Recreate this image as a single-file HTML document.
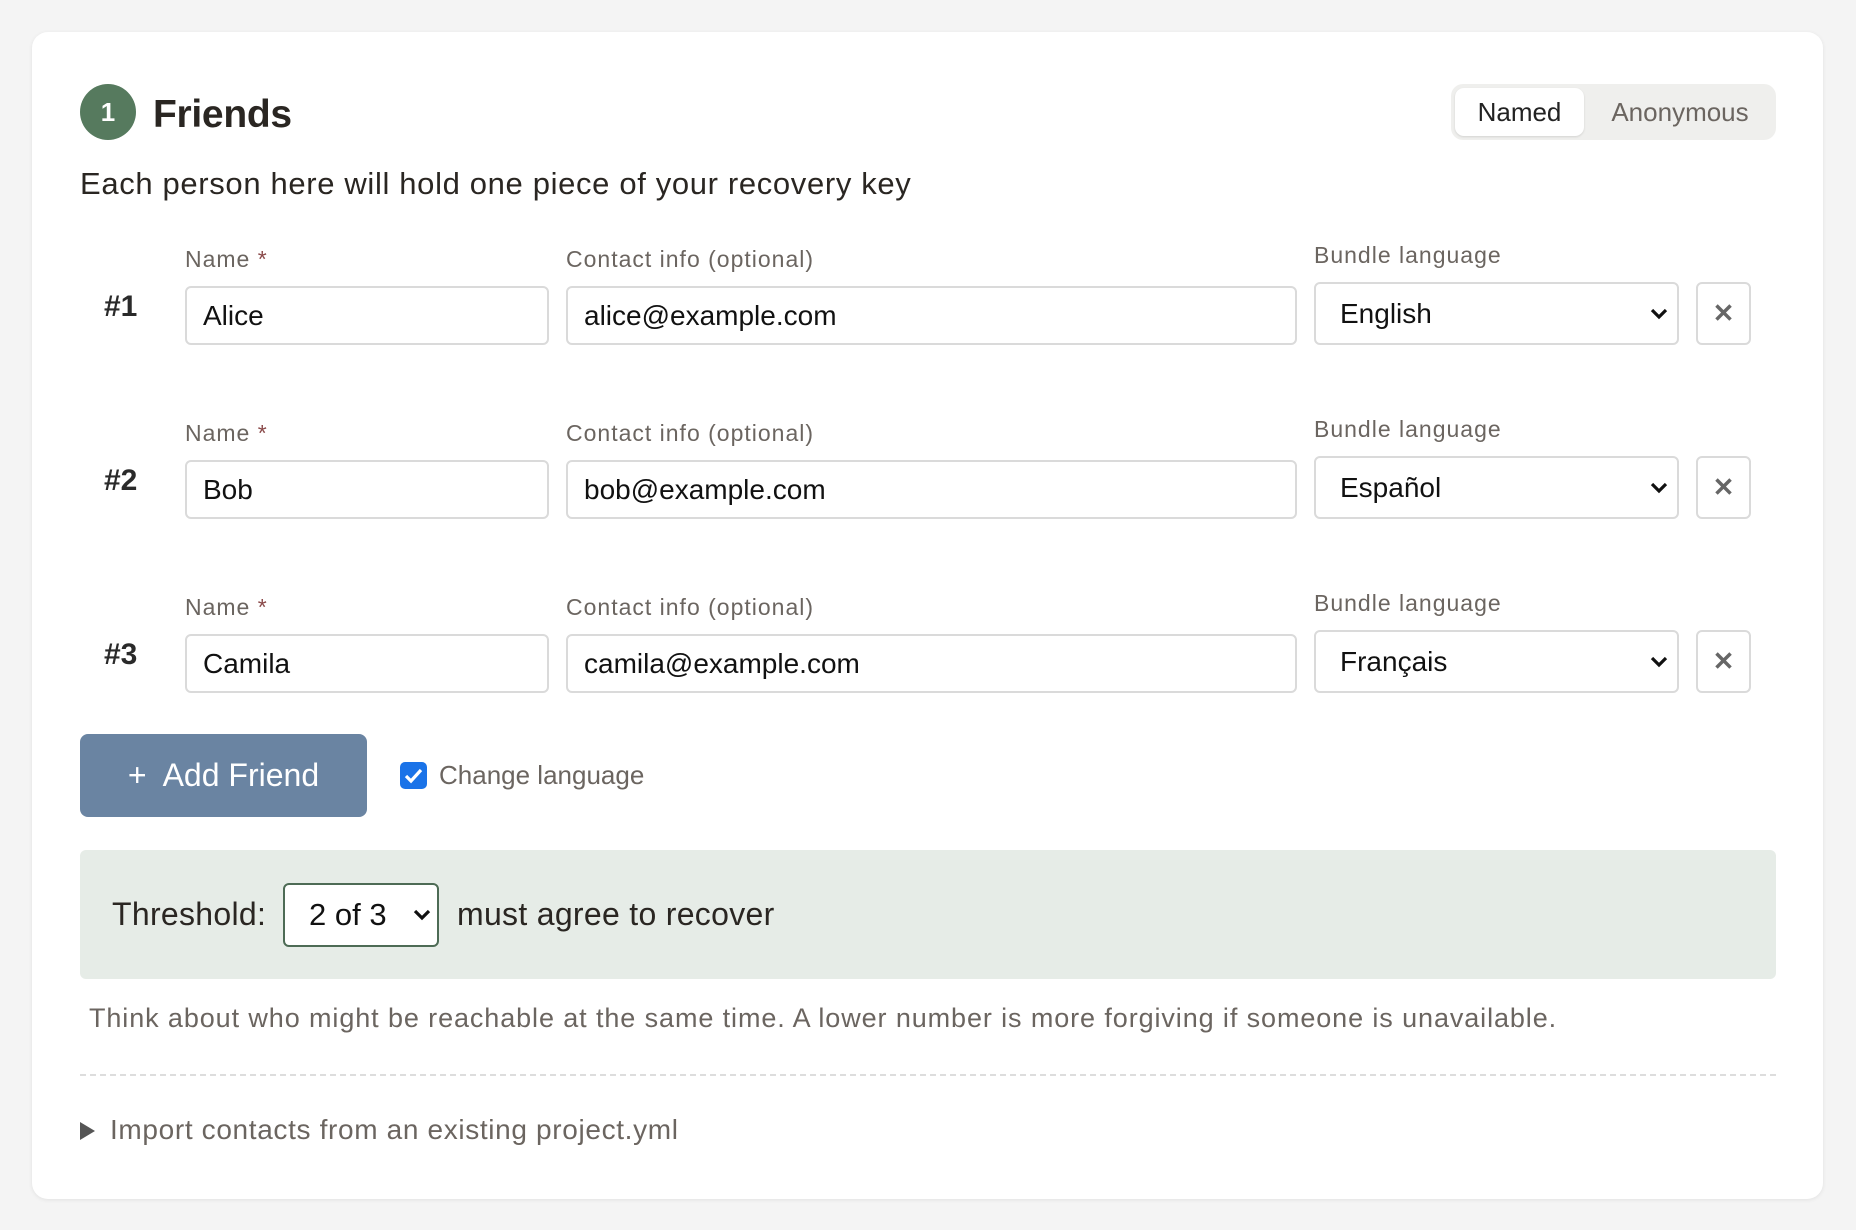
<!DOCTYPE html><html><head><meta charset="utf-8"><style>
body{margin:0;width:1856px;height:1230px;background:#f4f4f4;font-family:"Liberation Sans",sans-serif;position:relative;overflow:hidden}
.a{position:absolute}
.card{left:32px;top:32px;width:1791px;height:1167px;background:#fff;border-radius:16px;box-shadow:0 1px 4px rgba(0,0,0,.08)}
.inp{position:absolute;box-sizing:border-box;border:2px solid #dadada;border-radius:6px;background:#fff;font-size:28px;color:#111;padding-left:16px;display:flex;align-items:center}
.lbl{position:absolute;font-size:23px;color:#6b6560;letter-spacing:1px}
.num{position:absolute;font-size:30px;font-weight:bold;color:#2a2a2a}
.chev{position:absolute;right:8px;top:50%;margin-top:-7px}
</style></head><body>
<div class="a card"></div>
<div class="a" style="left:80px;top:84px;width:56px;height:56px;border-radius:50%;background:#567a5e;color:#fff;font-size:26px;font-weight:bold;display:flex;align-items:center;justify-content:center">1</div>
<div class="a" style="left:153px;top:93px;font-size:39px;font-weight:bold;color:#2a2622;letter-spacing:-0.3px">Friends</div>
<div class="a" style="left:1451px;top:84px;width:325px;height:56px;background:#efefed;border-radius:12px"></div>
<div class="a" style="left:1455px;top:88px;width:129px;height:48px;background:#fff;border-radius:9px;box-shadow:0 1px 2px rgba(0,0,0,.12);font-size:26px;color:#222;display:flex;align-items:center;justify-content:center">Named</div>
<div class="a" style="left:1584px;top:88px;width:192px;height:48px;font-size:26px;color:#6b6560;display:flex;align-items:center;justify-content:center">Anonymous</div>
<div class="a" style="left:80px;top:166px;font-size:31px;color:#2a2622;letter-spacing:0.65px">Each person here will hold one piece of your recovery key</div>

<div class="num" style="left:104px;top:290px">#1</div>
<div class="lbl" style="left:185px;top:246px">Name <span style="color:#8a4a4a">*</span></div>
<div class="lbl" style="left:566px;top:246px">Contact info (optional)</div>
<div class="lbl" style="left:1314px;top:242px">Bundle language</div>
<div class="inp" style="left:185px;top:286px;width:364px;height:59px">Alice</div>
<div class="inp" style="left:566px;top:286px;width:731px;height:59px">alice@example.com</div>
<div class="inp" style="left:1314px;top:282px;width:365px;height:63px;padding-left:24px">English<svg class="chev" width="20" height="14" viewBox="0 0 20 14"><path d="M3 3l7 7 7-7" stroke="#111" stroke-width="3.2" fill="none"/></svg></div>
<div class="inp" style="left:1696px;top:282px;width:55px;height:63px;padding:0;justify-content:center;color:#666;font-size:26px;font-weight:bold">✕</div>

<div class="num" style="left:104px;top:464px">#2</div>
<div class="lbl" style="left:185px;top:420px">Name <span style="color:#8a4a4a">*</span></div>
<div class="lbl" style="left:566px;top:420px">Contact info (optional)</div>
<div class="lbl" style="left:1314px;top:416px">Bundle language</div>
<div class="inp" style="left:185px;top:460px;width:364px;height:59px">Bob</div>
<div class="inp" style="left:566px;top:460px;width:731px;height:59px">bob@example.com</div>
<div class="inp" style="left:1314px;top:456px;width:365px;height:63px;padding-left:24px">Español<svg class="chev" width="20" height="14" viewBox="0 0 20 14"><path d="M3 3l7 7 7-7" stroke="#111" stroke-width="3.2" fill="none"/></svg></div>
<div class="inp" style="left:1696px;top:456px;width:55px;height:63px;padding:0;justify-content:center;color:#666;font-size:26px;font-weight:bold">✕</div>

<div class="num" style="left:104px;top:638px">#3</div>
<div class="lbl" style="left:185px;top:594px">Name <span style="color:#8a4a4a">*</span></div>
<div class="lbl" style="left:566px;top:594px">Contact info (optional)</div>
<div class="lbl" style="left:1314px;top:590px">Bundle language</div>
<div class="inp" style="left:185px;top:634px;width:364px;height:59px">Camila</div>
<div class="inp" style="left:566px;top:634px;width:731px;height:59px">camila@example.com</div>
<div class="inp" style="left:1314px;top:630px;width:365px;height:63px;padding-left:24px">Français<svg class="chev" width="20" height="14" viewBox="0 0 20 14"><path d="M3 3l7 7 7-7" stroke="#111" stroke-width="3.2" fill="none"/></svg></div>
<div class="inp" style="left:1696px;top:630px;width:55px;height:63px;padding:0;justify-content:center;color:#666;font-size:26px;font-weight:bold">✕</div>

<div class="a" style="left:80px;top:734px;width:287px;height:83px;background:#6a84a2;border-radius:8px;color:#fff;font-size:32px;display:flex;align-items:center;justify-content:center">+&nbsp; Add Friend</div>
<div class="a" style="left:400px;top:762px;width:27px;height:27px;background:#1a73e8;border-radius:5px"><svg width="27" height="27" viewBox="0 0 27 27"><path d="M6 14l5 5 10-11" stroke="#fff" stroke-width="3.2" fill="none"/></svg></div>
<div class="a" style="left:439px;top:760px;font-size:26px;color:#6b6560">Change language</div>

<div class="a" style="left:80px;top:850px;width:1696px;height:129px;background:#e6ece7;border-radius:6px"></div>
<div class="a" style="left:112px;top:896px;font-size:32px;color:#2a2622;letter-spacing:0.3px">Threshold:</div>
<div class="a" style="left:283px;top:883px;width:156px;height:64px;box-sizing:border-box;border:2px solid #4d6b55;border-radius:6px;background:#fff;font-size:31px;color:#111;padding-left:24px;display:flex;align-items:center">2 of 3<svg class="chev" style="right:5px" width="20" height="14" viewBox="0 0 20 14"><path d="M3 3l7 7 7-7" stroke="#111" stroke-width="3.2" fill="none"/></svg></div>
<div class="a" style="left:457px;top:896px;font-size:32px;color:#2a2622;letter-spacing:0.3px">must agree to recover</div>
<div class="a" style="left:89px;top:1003px;font-size:27px;color:#6b6560;letter-spacing:0.9px">Think about who might be reachable at the same time. A lower number is more forgiving if someone is unavailable.</div>
<div class="a" style="left:80px;top:1074px;width:1696px;border-top:2px dashed #ddd"></div>
<div class="a" style="left:80px;top:1122px;width:0;height:0;border-left:15px solid #555;border-top:9px solid transparent;border-bottom:9px solid transparent"></div>
<div class="a" style="left:110px;top:1114px;font-size:28px;color:#6b6560;letter-spacing:0.65px">Import contacts from an existing project.yml</div>
</body></html>
